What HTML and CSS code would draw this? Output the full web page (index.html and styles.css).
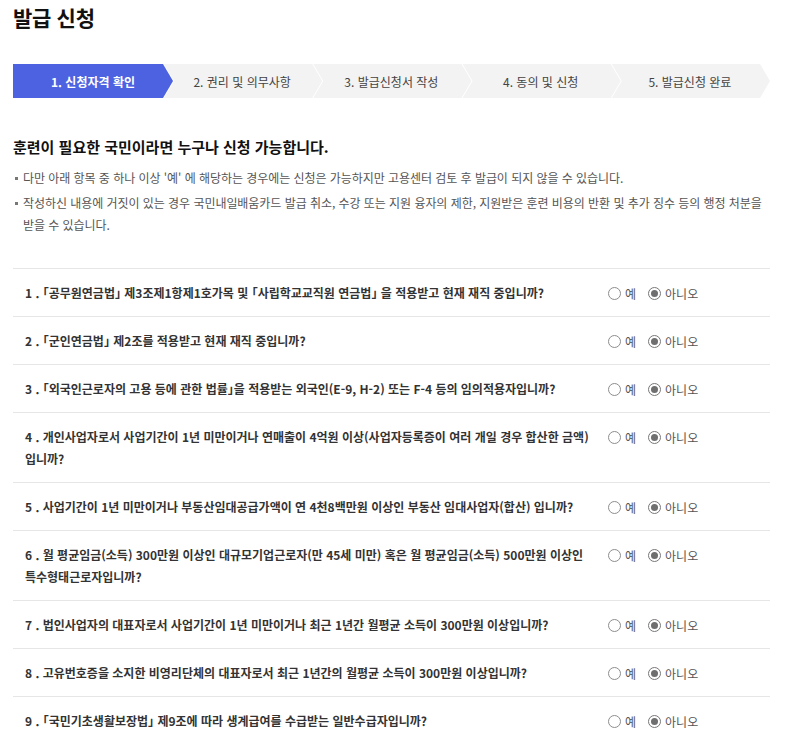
FILE: index.html
```html
<!DOCTYPE html>
<html lang="ko">
<head>
<meta charset="utf-8">
<title>발급 신청</title>
<link rel="stylesheet" href="styles.css">
</head>
<body>
<div class="page">
  <h1 class="title">발급 신청</h1>

  <ol class="steps">
    <li class="step first active">1. 신청자격 확인</li>
    <li class="step">2. 권리 및 의무사항</li>
    <li class="step">3. 발급신청서 작성</li>
    <li class="step">4. 동의 및 신청</li>
    <li class="step last">5. 발급신청 완료</li>
  </ol>

  <h2 class="lead">훈련이 필요한 국민이라면 누구나 신청 가능합니다.</h2>
  <ul class="notes">
    <li>다만 아래 항목 중 하나 이상 '예' 에 해당하는 경우에는 신청은 가능하지만 고용센터 검토 후 발급이 되지 않을 수 있습니다.</li>
    <li>작성하신 내용에 거짓이 있는 경우 국민내일배움카드 발급 취소, 수강 또는 지원 융자의 제한, 지원받은 훈련 비용의 반환 및 추가 징수 등의 행정 처분을 받을 수 있습니다.</li>
  </ul>

  <div class="qlist">
    <div class="qrow">
      <p class="qtext">1 . 「공무원연금법」 제3조제1항제1호가목 및 「사립학교교직원 연금법」 을 적용받고 현재 재직 중입니까?</p>
      <div class="opts"><span class="opt"><span class="radio"></span>예</span><span class="opt"><span class="radio on"></span>아니오</span></div>
    </div>
    <div class="qrow">
      <p class="qtext">2 . 「군인연금법」 제2조를 적용받고 현재 재직 중입니까?</p>
      <div class="opts"><span class="opt"><span class="radio"></span>예</span><span class="opt"><span class="radio on"></span>아니오</span></div>
    </div>
    <div class="qrow">
      <p class="qtext">3 . 「외국인근로자의 고용 등에 관한 법률」을 적용받는 외국인(E-9, H-2) 또는 F-4 등의 임의적용자입니까?</p>
      <div class="opts"><span class="opt"><span class="radio"></span>예</span><span class="opt"><span class="radio on"></span>아니오</span></div>
    </div>
    <div class="qrow">
      <p class="qtext">4 . 개인사업자로서 사업기간이 1년 미만이거나 연매출이 4억원 이상(사업자등록증이 여러 개일 경우 합산한 금액) 입니까?</p>
      <div class="opts"><span class="opt"><span class="radio"></span>예</span><span class="opt"><span class="radio on"></span>아니오</span></div>
    </div>
    <div class="qrow">
      <p class="qtext">5 . 사업기간이 1년 미만이거나 부동산임대공급가액이 연 4천8백만원 이상인 부동산 임대사업자(합산) 입니까?</p>
      <div class="opts"><span class="opt"><span class="radio"></span>예</span><span class="opt"><span class="radio on"></span>아니오</span></div>
    </div>
    <div class="qrow">
      <p class="qtext">6 . 월 평균임금(소득) 300만원 이상인 대규모기업근로자(만 45세 미만) 혹은 월 평균임금(소득) 500만원 이상인 특수형태근로자입니까?</p>
      <div class="opts"><span class="opt"><span class="radio"></span>예</span><span class="opt"><span class="radio on"></span>아니오</span></div>
    </div>
    <div class="qrow">
      <p class="qtext">7 . 법인사업자의 대표자로서 사업기간이 1년 미만이거나 최근 1년간 월평균 소득이 300만원 이상입니까?</p>
      <div class="opts"><span class="opt"><span class="radio"></span>예</span><span class="opt"><span class="radio on"></span>아니오</span></div>
    </div>
    <div class="qrow">
      <p class="qtext">8 . 고유번호증을 소지한 비영리단체의 대표자로서 최근 1년간의 월평균 소득이 300만원 이상입니까?</p>
      <div class="opts"><span class="opt"><span class="radio"></span>예</span><span class="opt"><span class="radio on"></span>아니오</span></div>
    </div>
    <div class="qrow">
      <p class="qtext">9 . 「국민기초생활보장법」 제9조에 따라 생계급여를 수급받는 일반수급자입니까?</p>
      <div class="opts"><span class="opt"><span class="radio"></span>예</span><span class="opt"><span class="radio on"></span>아니오</span></div>
    </div>
  </div>
</div>
</body>
</html>
```

FILE: styles.css
```css
* { box-sizing: border-box; }
body {
  margin: 0;
  font-family: "Noto Sans CJK KR", "Noto Sans", sans-serif;
  color: #222;
  background: #fff;
}
.page {
  width: 757px;
  margin-left: 13px;
}
.title {
  margin: 2px 0 0;
  font-size: 21px;
  line-height: 30px;
  font-weight: 700;
  color: #111;
  letter-spacing: -0.3px;
}
.steps {
  list-style: none;
  margin: 32px 0 0;
  padding: 0;
  display: flex;
  height: 34px;
}
.step {
  flex: 1;
  display: flex;
  align-items: center;
  justify-content: center;
  background: #f3f3f3;
  color: #444;
  font-size: 12px;
  letter-spacing: 0;
  margin-left: -9px;
  padding-right: 2px;
  clip-path: polygon(0 0, calc(100% - 10px) 0, 100% 50%, calc(100% - 10px) 100%, 0 100%, 10px 50%);
}
.step.first {
  flex: 0 0 160px;
  margin-left: 0;
  padding-right: 0;
  clip-path: polygon(0 0, calc(100% - 10px) 0, 100% 50%, calc(100% - 10px) 100%, 0 100%);
}
.step.active {
  background: #4c62e1;
  color: #fff;
  font-weight: 700;
}
.lead {
  margin: 38px 0 0;
  font-size: 15px;
  line-height: 22px;
  font-weight: 700;
  color: #111;
  letter-spacing: 0;
}
.notes {
  list-style: none;
  margin: 9px 0 0;
  padding: 0;
  font-size: 12px;
  line-height: 22px;
  color: #555;
  letter-spacing: -0.05px;
}
.notes li {
  position: relative;
  padding-left: 10px;
  margin-bottom: 3px;
}
.notes li::before {
  content: "";
  position: absolute;
  left: 2px;
  top: 10px;
  width: 3px;
  height: 3px;
  background: #777;
}
.qlist {
  margin-top: 32px;
  border-top: 1px solid #e6e6e6;
}
.qrow {
  display: flex;
  align-items: flex-start;
  border-bottom: 1px solid #e6e6e6;
  padding: 13px 0 12px 12px;
}
.qtext {
  flex: 1;
  margin: 0;
  padding-right: 10px;
  font-size: 12px;
  line-height: 22px;
  font-weight: 700;
  color: #333;
  letter-spacing: 0;
  word-break: keep-all;
  font-feature-settings: "halt";
}
.opts {
  width: 162px;
  display: flex;
  align-items: center;
  height: 22px;
  font-size: 12px;
  color: #555;
}
.opt {
  display: inline-flex;
  align-items: center;
  margin-right: 12px;
}
.radio {
  width: 13px;
  height: 13px;
  border: 1px solid #8d8d8d;
  border-radius: 50%;
  margin-right: 4px;
  display: inline-flex;
  align-items: center;
  justify-content: center;
  background: #fff;
}
.radio.on {
  border-color: #777;
}
.radio.on::after {
  content: "";
  width: 7px;
  height: 7px;
  border-radius: 50%;
  background: #6f6f6f;
}
```
